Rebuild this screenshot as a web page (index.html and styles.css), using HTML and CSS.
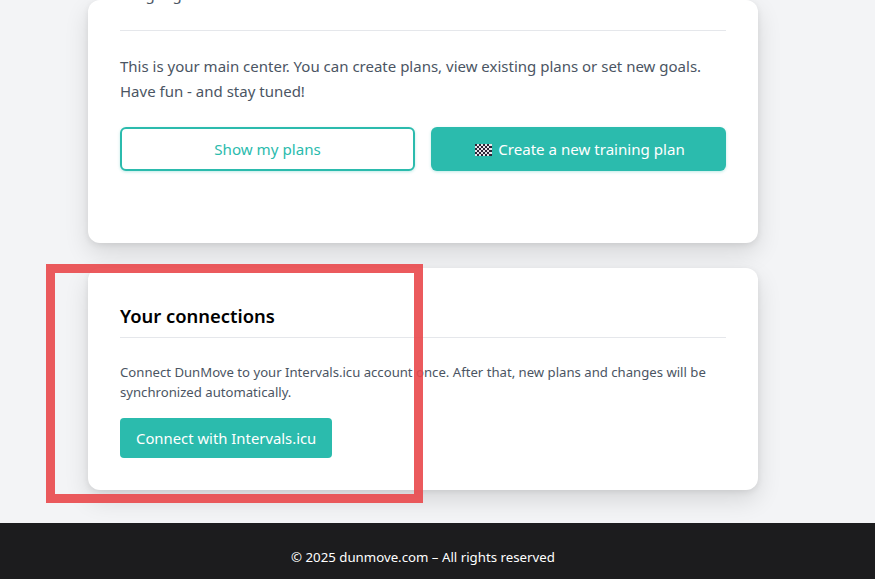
FILE: index.html
```html
<!DOCTYPE html>
<html lang="en">
<head>
  <meta charset="UTF-8" />
  <meta name="viewport" content="width=device-width, initial-scale=1.0"/>
  <title>Dashboard - DunMove</title>
  <link rel="stylesheet" href="styles.css">
</head>
<body>
  <main class="content">
    <section class="card card-main">
      <p class="card-top">Language</p>
      <p class="intro">This is your main center. You can create plans, view existing plans or set new goals.<br>Have fun - and stay tuned!</p>
      <div class="actions">
        <button type="button" class="btn btn-outline">Show my plans</button>
        <button type="button" class="btn btn-solid">
          <svg class="flag" width="17" height="12" viewBox="0 0 17 12" aria-hidden="true">
            <rect width="17" height="12" fill="#e8e4ea"/>
            <path fill="#2b2436" d="M0 0h2v2H0zM4 0h2v2H4zM8 0h2v2H8zM12 0h2v2h-2zM2 2h2v2H2zM6 2h2v2H6zM10 2h2v2h-2zM14 2h3v2h-3zM0 4h2v2H0zM4 4h2v2H4zM8 4h2v2H8zM12 4h2v2h-2zM2 6h2v2H2zM6 6h2v2H6zM10 6h2v2h-2zM14 6h3v2h-3zM0 8h2v2H0zM4 8h2v2H4zM8 8h2v2H8zM12 8h2v2h-2zM2 10h2v2H2zM6 10h2v2H6zM10 10h2v2h-2zM14 10h3v2h-3z"/>
          </svg>
          Create a new training plan
        </button>
      </div>
    </section>

    <section class="card card-connect">
      <h2>Your connections</h2>
      <p class="note">Connect DunMove to your Intervals.icu account once. After that, new plans and changes will be synchronized automatically.</p>
      <button type="button" class="btn btn-connect">Connect with Intervals.icu</button>
    </section>
  </main>

  <footer class="footer">&copy; 2025 dunmove.com – All rights reserved</footer>

  <div class="highlight"></div>
</body>
</html>
```

FILE: styles.css
```css
:root {
  --teal: #2bbbad;
  --line: #e5e7eb;
  --text: #4b5563;
}

html, body {
  height: 100%;
}

body {
  margin: 0;
  position: relative;
  overflow: hidden;
  display: flex;
  flex-direction: column;
  font-family: "Noto Sans", sans-serif;
  background-color: #f3f4f6;
  color: var(--text);
}

.content {
  flex: 1;
  display: flex;
  flex-direction: column;
  gap: 25px;
  width: 670px;
  margin-left: 88px;
}

.card {
  background-color: #fff;
  border-radius: 12px;
  padding: 0 32px;
  box-shadow: 0 10px 25px rgba(0,0,0,0.12), 0 2px 6px rgba(0,0,0,0.08);
}

.card-main {
  height: 243px;
  box-sizing: border-box;
}

.card-top {
  margin: -17px 0 0;
  height: 48px;
  line-height: 22px;
  font-size: 15px;
  box-sizing: border-box;
  border-bottom: 1px solid var(--line);
}

.intro {
  margin: 23px 0 0;
  font-size: 15px;
  line-height: 25px;
}

.actions {
  display: grid;
  grid-template-columns: 1fr 1fr;
  gap: 16px;
  margin-top: 23px;
}

.btn {
  font-family: inherit;
  font-size: 15.15px;
  border-radius: 6px;
  cursor: pointer;
}

.btn-outline {
  height: 44px;
  background-color: #fff;
  color: var(--teal);
  border: 2px solid var(--teal);
  box-shadow: 0 1px 3px rgba(43,187,173,0.3);
}

.btn-solid {
  height: 44px;
  padding-left: 9px;
  font-size: 15.1px;
  background-color: var(--teal);
  color: #fff;
  border: none;
  box-shadow: 0 1px 3px rgba(43,187,173,0.3);
}

.flag {
  vertical-align: -1px;
  margin-right: 2px;
}

.card-connect {
  height: 222px;
  box-sizing: border-box;
  padding-top: 35px;
}

.card-connect h2 {
  margin: 0;
  padding-bottom: 8px;
  font-size: 18.4px;
  line-height: 26px;
  font-weight: 600;
  color: #000;
  border-bottom: 1px solid var(--line);
}

.note {
  margin: 24px 0 0;
  font-size: 13.15px;
  line-height: 20px;
}

.btn-connect {
  display: block;
  margin-top: 16px;
  height: 40px;
  padding: 0 16px;
  font-size: 14.85px;
  background-color: var(--teal);
  color: #fff;
  border: none;
  border-radius: 4px;
}

.footer {
  height: 56px;
  line-height: 69px;
  margin-top: 33px;
  padding-left: 291px;
  background-color: #1c1c1e;
  color: #fff;
  font-size: 13.25px;
}

.highlight {
  position: absolute;
  left: 46px;
  top: 264px;
  width: 359px;
  height: 221px;
  border: 9px solid rgba(233, 72, 75, 0.9);
}
```
